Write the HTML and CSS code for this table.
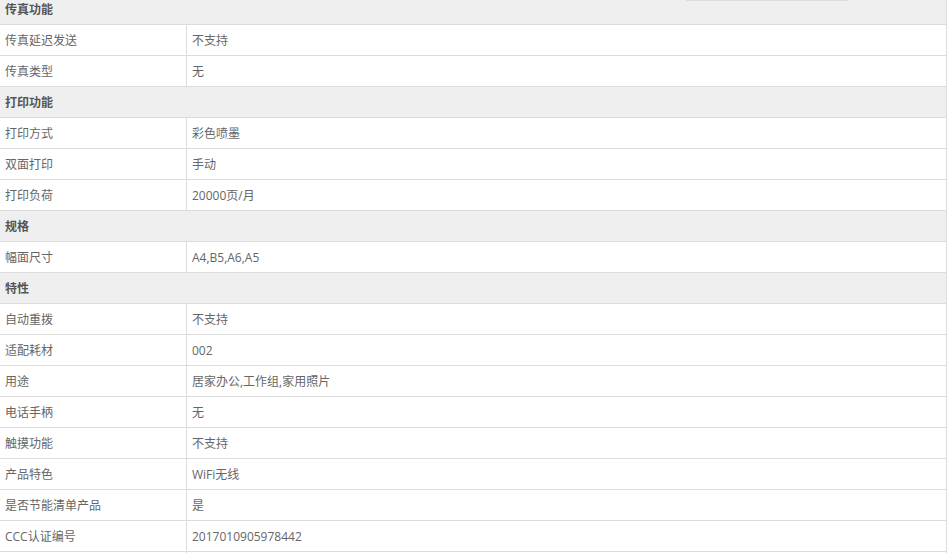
FILE: index.html
```html
<!DOCTYPE html>
<html lang="zh-CN">
<head>
<meta charset="utf-8">
<title>参数</title>
<link rel="stylesheet" href="styles.css">
</head>
<body>
<div class="dropdown-edge"></div>
<table class="spec">
  <colgroup><col class="c-name"><col class="c-val"></colgroup>
  <tr class="group"><th colspan="2">传真功能</th></tr>
  <tr><td>传真延迟发送</td><td>不支持</td></tr>
  <tr><td>传真类型</td><td>无</td></tr>
  <tr class="group"><th colspan="2">打印功能</th></tr>
  <tr><td>打印方式</td><td>彩色喷墨</td></tr>
  <tr><td>双面打印</td><td>手动</td></tr>
  <tr><td>打印负荷</td><td>20000页/月</td></tr>
  <tr class="group"><th colspan="2">规格</th></tr>
  <tr><td>幅面尺寸</td><td>A4,B5,A6,A5</td></tr>
  <tr class="group"><th colspan="2">特性</th></tr>
  <tr><td>自动重拨</td><td>不支持</td></tr>
  <tr><td>适配耗材</td><td>002</td></tr>
  <tr><td>用途</td><td>居家办公,工作组,家用照片</td></tr>
  <tr><td>电话手柄</td><td>无</td></tr>
  <tr><td>触摸功能</td><td>不支持</td></tr>
  <tr><td>产品特色</td><td>WiFi无线</td></tr>
  <tr><td>是否节能清单产品</td><td>是</td></tr>
  <tr><td>CCC认证编号</td><td>2017010905978442</td></tr>
  <tr><td>&nbsp;</td><td>&nbsp;</td></tr>
</table>
</body>
</html>
```
FILE: styles.css
```css
html, body {
  margin: 0;
  padding: 0;
  background: #fff;
  overflow: hidden;
}
body {
  font-family: "Open Sans", "Noto Sans CJK SC", sans-serif;
  font-size: 12px;
  color: #666;
  position: relative;
}
.dropdown-edge {
  position: absolute;
  left: 686px;
  top: 0;
  width: 162px;
  height: 1px;
  background: #dcdcdc;
  z-index: 2;
}
.spec {
  border-collapse: collapse;
  width: 948px;
  margin: -7px 0 0 -1px;
  table-layout: fixed;
}
.c-name { width: 187px; }
.spec td, .spec th {
  height: 31px;
  padding: 2px 0 0 5px;
  border: 1px solid #dcdcdc;
  text-align: left;
  vertical-align: middle;
  line-height: 28px;
  box-sizing: border-box;
  white-space: nowrap;
}
.spec .group th {
  background: #efefef;
  font-weight: bold;
  color: #555;
}
```
